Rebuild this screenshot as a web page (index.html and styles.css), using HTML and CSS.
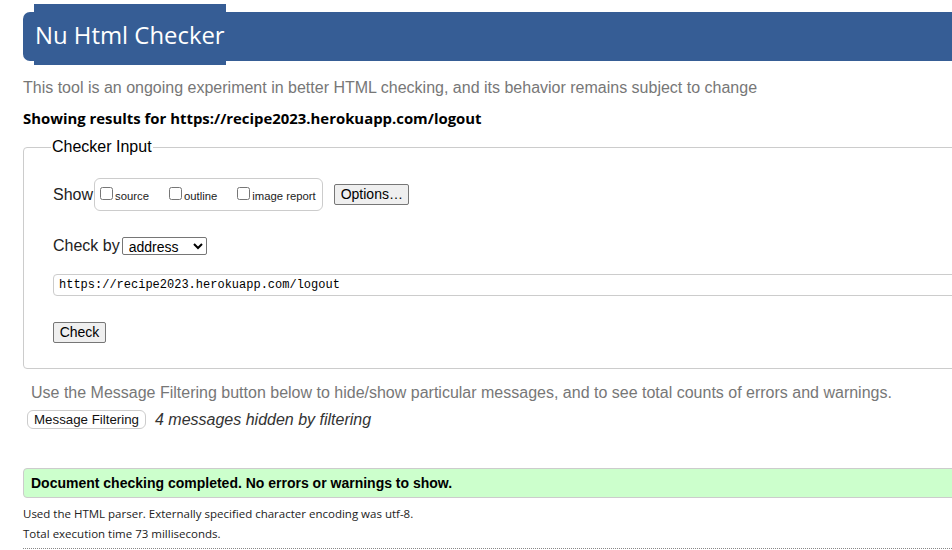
FILE: index.html
```html
<!DOCTYPE html>
<html lang="en">
<head>
<meta charset="utf-8">
<title>Showing results for https://recipe2023.herokuapp.com/logout - Nu Html Checker</title>
<link rel="stylesheet" href="styles.css">
</head>
<body>
<h1 class="title"><span class="title-tab">Nu Html Checker</span></h1>
<p class="intro">This tool is an ongoing experiment in better HTML checking, and its behavior remains subject to change</p>
<p class="showing">Showing results for https://recipe2023.herokuapp.com/logout</p>
<form class="checker">
  <fieldset class="checker-input">
    <legend class="checker-legend">Checker Input</legend>
    <div class="show-row">
      <span class="row-label">Show</span>
      <fieldset class="show-options">
        <label class="opt"><input type="checkbox" class="cb"><span>source</span></label>
        <label class="opt"><input type="checkbox" class="cb"><span>outline</span></label>
        <label class="opt"><input type="checkbox" class="cb"><span>image report</span></label>
      </fieldset>
      <button type="button" class="btn btn-options">Options…</button>
    </div>
    <div class="checkby-row">
      <span class="row-label">Check by</span>
      <select class="checkby-select"><option>address</option></select>
    </div>
    <div class="url-row">
      <input type="url" class="url-input" value="https://recipe2023.herokuapp.com/logout">
    </div>
    <div class="submit-row">
      <button type="button" class="btn btn-check">Check</button>
    </div>
  </fieldset>
</form>
<p class="filter-info">Use the Message Filtering button below to hide/show particular messages, and to see total counts of errors and warnings.</p>
<div class="filter-row">
  <button type="button" class="filter-btn">Message Filtering</button>
  <span class="filter-note">4 messages hidden by filtering</span>
</div>
<p class="success">Document checking completed. No errors or warnings to show.</p>
<p class="details details-first">Used the HTML parser. Externally specified character encoding was utf-8.</p>
<p class="details">Total execution time 73 milliseconds.</p>
<hr class="dotted">
</body>
</html>
```
FILE: styles.css
```css
html {
  overflow: hidden;
  background: #fff;
}
body {
  margin: 0;
  padding: 0 0 0 23px;
  font-family: "Liberation Sans", Arial, sans-serif;
  color: #000;
}
.title {
  margin: 12px -40px 0 0;
  height: 49px;
  background: #365d95;
  border-radius: 7px 0 0 7px;
  padding-left: 11px;
  display: flex;
  align-items: flex-start;
  font-weight: normal;
}
.title-tab {
  display: block;
  margin-top: -8px;
  height: 61px;
  line-height: 61px;
  background: #365d95;
  color: #fff;
  font-family: "Open Sans", sans-serif;
  font-size: 23.9px;
  padding: 0 1px;
}
.intro {
  margin: 17px 0 0 0;
  font-size: 16px;
  line-height: 20px;
  color: #777;
}
.showing {
  margin: 10px 0 0 0;
  font-family: "Open Sans", sans-serif;
  font-weight: bold;
  font-size: 14.9px;
  line-height: 20px;
}
.checker {
  margin: 9px -40px 0 0;
}
.checker-input {
  margin: 0;
  border: 1px solid #ccc;
  border-radius: 4px;
  padding: 10px 28px 24px 29px;
  height: 232px;
  box-sizing: border-box;
  min-width: 0;
}
.checker-legend {
  font-size: 16px;
  padding: 0 1px;
  margin-left: -2px;
  line-height: 20px;
}
.show-row {
  display: flex;
  align-items: center;
  margin-top: 11px;
}
.row-label {
  font-size: 16px;
  color: #222;
}
.show-options {
  margin: 0 0 0 1px;
  padding: 0 6px 0 5px;
  border: 1px solid #ccc;
  border-radius: 6px;
  height: 33px;
  box-sizing: border-box;
  display: flex;
  align-items: center;
  gap: 20px;
  min-width: 0;
}
.opt {
  display: flex;
  align-items: center;
  font-size: 11.3px;
  color: #222;
}
.cb {
  margin: 0 2px 2px 0;
  width: 13px;
  height: 13px;
}
.opt span {
  position: relative;
  top: 1px;
}
.btn {
  font-family: "Liberation Sans", Arial, sans-serif;
  font-size: 14px;
  background: #efefef;
  border: 1px solid #767676;
  border-radius: 2px;
  color: #000;
  padding: 0 6px;
  height: 21px;
  box-sizing: border-box;
  line-height: 19px;
}
.btn-options {
  margin-left: 11px;
  width: 75px;
}
.checkby-row {
  display: flex;
  align-items: center;
  margin-top: 26px;
}
.checkby-select {
  margin-left: 2px;
  width: 85px;
  height: 18px;
  font-family: "Liberation Sans", Arial, sans-serif;
  font-size: 14px;
  border: 1px solid #767676;
  border-radius: 2px;
  background: #fff;
  padding: 0 0 0 2px;
}
.url-row {
  margin-top: 19px;
}
.url-input {
  display: block;
  width: 100%;
  box-sizing: border-box;
  height: 22px;
  border: 1px solid #ccc;
  border-radius: 4px;
  font-family: "Liberation Mono", monospace;
  font-size: 12px;
  padding: 0 5px;
  color: #000;
}
.submit-row {
  margin-top: 26px;
}
.btn-check {
  width: 53px;
  padding: 0;
}
.filter-info {
  margin: 14px 0 0 8px;
  font-size: 16px;
  line-height: 20px;
  color: #777;
}
.filter-row {
  margin: 7px 0 0 4px;
  display: flex;
  align-items: center;
  gap: 9px;
}
.filter-btn {
  font-family: "Liberation Sans", Arial, sans-serif;
  font-size: 13.3px;
  background: #fff;
  border: 1px solid #ccc;
  border-radius: 6px;
  height: 19px;
  padding: 0 4px;
  box-sizing: border-box;
  line-height: 17px;
  color: #111;
  width: 119px;
}
.filter-note {
  font-size: 16px;
  font-style: italic;
  color: #333;
}
.success {
  margin: 39px -40px 0 0;
  height: 30px;
  box-sizing: border-box;
  background: #ccffcc;
  border: 1px solid #ccc;
  border-radius: 4px 0 0 4px;
  padding: 0 0 0 7px;
  font-weight: bold;
  font-size: 14px;
  line-height: 28px;
}
.details {
  margin: 0;
  font-family: "Open Sans", sans-serif;
  font-size: 11.5px;
  line-height: 20px;
  color: #222;
}
.details-first {
  margin-top: 6px;
}
.dotted {
  margin: 4px -40px 0 0;
  border: 0;
  border-top: 1px dotted #888;
  height: 0;
}
```
